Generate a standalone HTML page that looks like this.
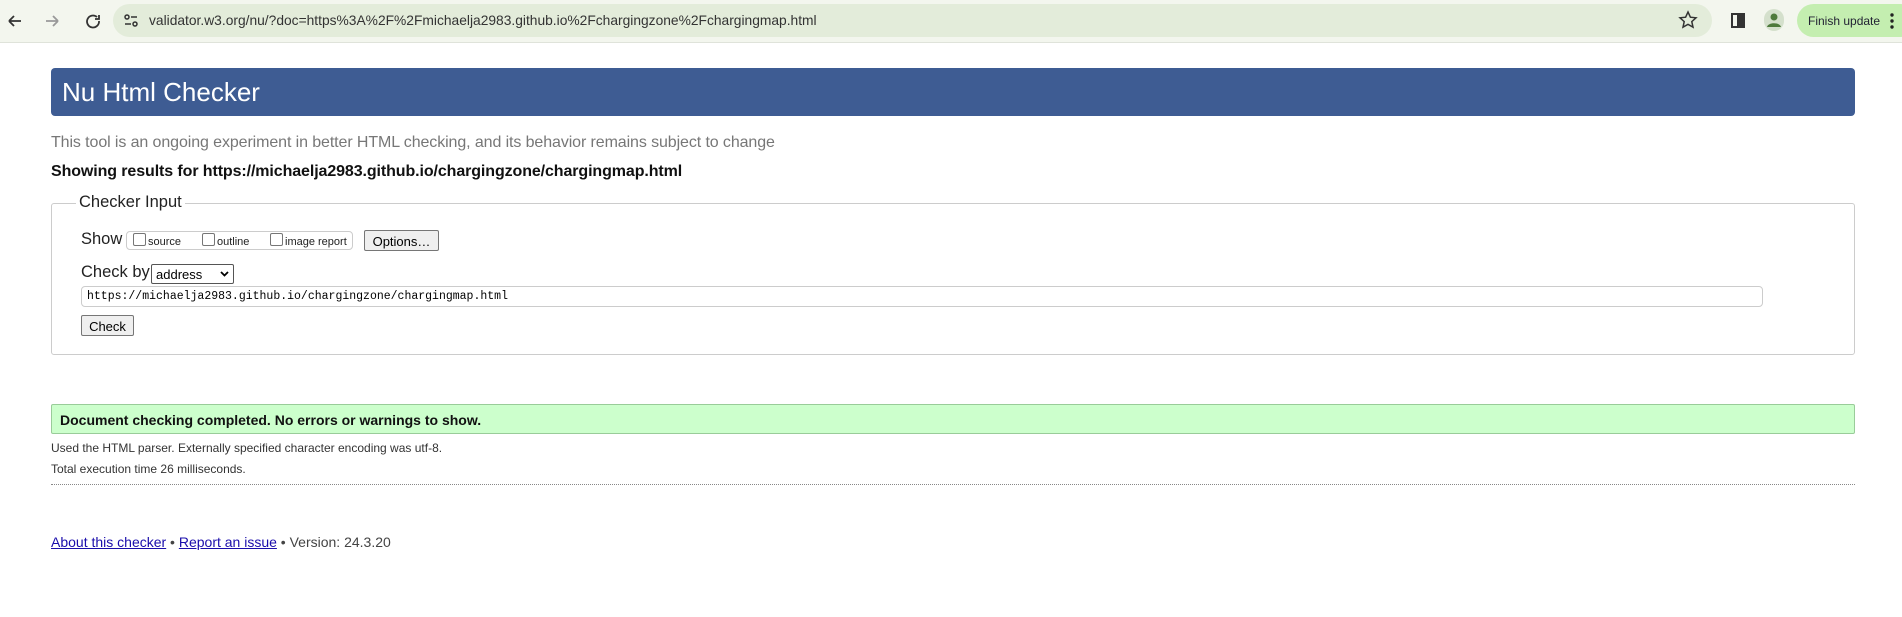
<!DOCTYPE html>
<html><head><meta charset="utf-8"><style>
*{box-sizing:border-box}
body{margin:0;width:1902px;height:617px;background:#fff;font-family:"Liberation Sans",Arial,sans-serif;position:relative;overflow:hidden}
.abs{position:absolute}
#tb{left:0;top:0;width:1902px;height:43px;background:#f3f6ee;border-bottom:1px solid #dfe3da}
#addr{left:113px;top:4px;width:1599px;height:33px;border-radius:17px;background:#e3ecda}
#addr span{position:absolute;left:36px;top:9px;font-size:13.8px;color:#333}
#fin{left:1797px;top:4px;width:120px;height:33px;border-radius:17px;background:#c4eeb0;font-size:12px;color:#223}
#hd{left:51px;top:68px;width:1804px;height:48px;background:#3e5c93;border-radius:4px;color:#fff;font-size:26px;padding:9px 0 0 11px}
.t{font-size:16px;color:#777}
#fs{left:51px;top:203px;width:1804px;height:152px;border:1px solid #ccc;border-radius:3px}
.lbl{font-size:16.5px;color:#222}
.cb{display:inline-block;width:13px;height:13px;border:1px solid #767676;border-radius:2px;background:#fff}
.btn{border:1px solid #767676;background:#efefef;border-radius:2px;font-size:13px;color:#000;text-align:center}
a{color:#1a0dab;text-decoration:underline}
</style></head><body>
<div id="tb" class="abs"></div>
<svg class="abs" style="left:6px;top:12px" width="150" height="20" viewBox="0 0 150 20">
<path d="M3 9h12M3 9l5-5M3 9l5 5" stroke="#333" stroke-width="1.8" fill="none"/>
<path d="M40 9h12M52 9l-5-5M52 9l-5 5" stroke="#999" stroke-width="1.8" fill="none"/>
<path d="M91 5a6 6 0 1 0 2 4M93 3v4h-4" stroke="#333" stroke-width="1.8" fill="none"/>
</svg>
<div id="addr" class="abs"><svg class="abs" style="left:10px;top:9px" width="16" height="16"><circle cx="4" cy="4" r="2" fill="none" stroke="#333" stroke-width="1.5"/><path d="M8 4h6M2 11h6" stroke="#333" stroke-width="1.5"/><circle cx="12" cy="11" r="2" fill="none" stroke="#333" stroke-width="1.5"/></svg><span>validator.w3.org/nu/?doc=https%3A%2F%2Fmichaelja2983.github.io%2Fchargingzone%2Fchargingmap.html</span></div>
<svg class="abs" style="left:1678px;top:10px" width="20" height="20"><path d="M10 2l2.4 5.2 5.6.6-4.2 3.8 1.2 5.6L10 14.4 5 17.2l1.2-5.6L2 7.8l5.6-.6z" fill="none" stroke="#333" stroke-width="1.5"/></svg>
<div class="abs" style="left:1731px;top:13px;width:14px;height:15px;border:2px solid #333"><div style="position:absolute;left:4px;top:0;width:6px;height:11px;background:#333"></div></div>
<div class="abs" style="left:1764px;top:9px;width:20px;height:22px;border-radius:10px;background:#d4e0cc"><svg width="20" height="22"><circle cx="10" cy="8" r="3.5" fill="#4e7a3c"/><path d="M3 18c1-5 13-5 14 0z" fill="#4e7a3c"/></svg></div>
<div id="fin" class="abs"><span style="position:absolute;left:11px;top:10px">Finish update</span><svg class="abs" style="left:92px;top:9px" width="6" height="16"><circle cx="3" cy="2" r="1.7" fill="#222"/><circle cx="3" cy="8" r="1.7" fill="#222"/><circle cx="3" cy="14" r="1.7" fill="#222"/></svg></div>
<div id="hd" class="abs">Nu Html Checker</div>
<div class="abs t" style="left:51px;top:134px;letter-spacing:-0.1px">This tool is an ongoing experiment in better HTML checking, and its behavior remains subject to change</div>
<div class="abs" style="left:51px;top:163px;font-size:16px;font-weight:bold;color:#111;letter-spacing:-0.1px">Showing results for https://michaelja2983.github.io/chargingzone/chargingmap.html</div>
<div id="fs" class="abs"></div>
<div class="abs lbl" style="left:76px;top:193px;background:#fff;padding:0 3px">Checker Input</div>
<div class="abs lbl" style="left:81px;top:230px">Show</div>
<div class="abs" style="left:126px;top:231px;width:227px;height:19px;border:1px solid #ccc;border-radius:4px;font-size:11px;color:#222">
<span class="cb abs" style="left:6px;top:1px"></span><span class="abs" style="left:21px;top:4px">source</span>
<span class="cb abs" style="left:75px;top:1px"></span><span class="abs" style="left:90px;top:4px">outline</span>
<span class="cb abs" style="left:143px;top:1px"></span><span class="abs" style="left:158px;top:4px">image report</span></div>
<div class="abs btn" style="left:364px;top:230px;width:75px;height:21px;padding-top:3px">Options…</div>
<div class="abs lbl" style="left:81px;top:263px">Check by</div>
<div class="abs" style="left:151px;top:264px;width:83px;height:20px;border:1px solid #555;border-radius:2px;font-size:13px;padding:2px 0 0 4px">address<svg class="abs" style="left:68px;top:6px" width="9" height="6"><path d="M1 1l3.5 3.5L8 1" stroke="#000" stroke-width="1.8" fill="none"/></svg></div>
<div class="abs" style="left:81px;top:286px;width:1682px;height:21px;border:1px solid #ccc;border-radius:4px;font-family:'Liberation Mono',monospace;font-size:11.5px;padding:3px 0 0 5px">https://michaelja2983.github.io/chargingzone/chargingmap.html</div>
<div class="abs btn" style="left:81px;top:315px;width:53px;height:21px;padding-top:3px">Check</div>
<div class="abs" style="left:51px;top:404px;width:1804px;height:30px;background:#ccffcc;border:1px solid #9c9;border-radius:2px;font-size:14px;font-weight:bold;padding:7px 0 0 8px;color:#111">Document checking completed. No errors or warnings to show.</div>
<div class="abs" style="left:51px;top:441px;font-size:12px;color:#333">Used the HTML parser. Externally specified character encoding was utf-8.</div>
<div class="abs" style="left:51px;top:462px;font-size:12px;color:#333">Total execution time 26 milliseconds.</div>
<div class="abs" style="left:51px;top:484px;width:1804px;border-top:1px dotted #888"></div>
<div class="abs" style="left:51px;top:534px;font-size:14px;color:#444"><a>About this checker</a> • <a>Report an issue</a> • Version: 24.3.20</div>
</body></html>
